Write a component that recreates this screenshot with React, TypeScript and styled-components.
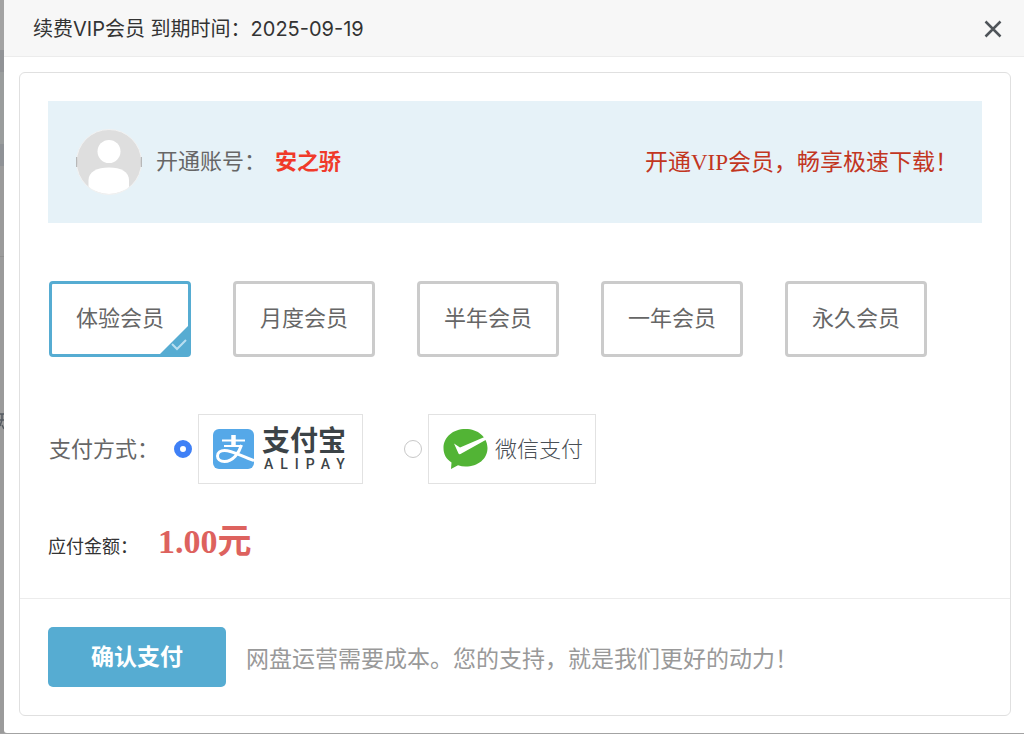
import React, { useState } from "react";
import styled, { createGlobalStyle } from "styled-components";

const serif = `"Liberation Serif", "Noto Sans CJK SC", serif`;
const sans = `Inter, "Noto Sans CJK SC", sans-serif`;
const cjk = `"Noto Sans CJK SC", sans-serif`;

const GlobalStyle = createGlobalStyle`
  * { box-sizing: border-box; }
  body { margin: 0; background: #a3a3a3; font-family: ${serif}; color: #666; }
  h1, p { margin: 0; font-weight: 400; }
`;

const Screen = styled.div`
  display: flex;
  min-height: 100vh;
  padding-bottom: 1px;
`;

const Backdrop = styled.div`
  width: 4px;
  flex: none;
  overflow: hidden;
  padding-top: 412px;
  background: linear-gradient(
    #a3a3a3 0 50px,
    #919396 50px 72px,
    #9a9d9d 72px 144px,
    #8f9296 144px 166px,
    #9b9b9b 166px 256px,
    #8f8f8f 256px 257px,
    #9b9b9b 257px
  );
  svg { display: block; }
`;

const Dialog = styled.section`
  flex: 1;
  min-width: 0;
  display: flex;
  flex-direction: column;
  background: #fff;
  border-bottom-left-radius: 3px;
`;

const TitleBar = styled.header`
  display: flex;
  align-items: center;
  justify-content: space-between;
  height: 57px;
  padding: 2px 22px 0 29px;
  background: #f7f7f7;
  border-bottom: 1px solid #ececec;
`;

const Title = styled.h1`
  font-family: ${sans};
  font-size: 20px;
  line-height: 28px;
  color: #333;
`;

const CloseButton = styled.button`
  display: flex;
  padding: 0;
  border: 0;
  background: none;
  cursor: pointer;
`;

const Card = styled.form`
  flex: 1;
  display: flex;
  flex-direction: column;
  margin: 15px 13px 17px 15px;
  border: 1px solid #e0e0e0;
  border-radius: 6px;
`;

const Content = styled.div`
  flex: 1;
  padding: 28px 28px 0;
`;

const Banner = styled.div`
  display: flex;
  align-items: center;
  justify-content: space-between;
  height: 122px;
  padding: 0 24px 0 28px;
  background: #e6f2f8;
`;

const Account = styled.div`
  display: flex;
  align-items: center;
  font-size: 22px;
  line-height: 32px;
  svg { margin-right: 14px; }
`;

const AccountName = styled.strong`
  margin-left: 9px;
  color: #f03a2a;
`;

const Slogan = styled.p`
  padding-top: 2px;
  font-size: 23px;
  line-height: 32px;
  color: #c2361f;
`;

const Plans = styled.div`
  display: flex;
  flex-wrap: wrap;
  gap: 42px;
  padding: 58px 0 0 1px;
`;

const Plan = styled.button<{ $active: boolean }>`
  position: relative;
  width: 142px;
  height: 76px;
  padding: 0;
  border: 3px solid ${(p) => (p.$active ? "#56acd2" : "#cbcbcb")};
  border-radius: 4px;
  background: #fff;
  color: #666;
  font-family: ${serif};
  font-size: 22px;
  line-height: 32px;
  cursor: pointer;
`;

const Tick = styled.svg`
  position: absolute;
  right: -1px;
  bottom: -1px;
`;

const Methods = styled.fieldset`
  display: flex;
  align-items: center;
  margin: 57px 0 0;
  padding: 0 0 0 1px;
  border: 0;
`;

const MethodsLabel = styled.span`
  width: 125px;
  padding-top: 2px;
  font-size: 22px;
  line-height: 32px;
`;

const Method = styled.label`
  display: flex;
  align-items: center;
  gap: 6px;
  margin-right: 41px;
  cursor: pointer;
`;

const Radio = styled.input`
  appearance: none;
  width: 18px;
  height: 18px;
  margin: 0;
  border: 1px solid #c8c8c8;
  border-radius: 50%;
  background: #fff;
  &:checked { border: 6px solid #3f80f6; }
`;

const Logo = styled.span<{ $width: number }>`
  display: flex;
  align-items: center;
  width: ${(p) => p.$width}px;
  height: 70px;
  padding-left: 14px;
  border: 1px solid #e2e2e2;
`;

const AlipayWordmark = styled.span`
  display: flex;
  flex-direction: column;
  margin-left: 8px;
  color: #3c4347;
`;

const AlipayName = styled.span`
  font-family: "Liberation Sans", ${cjk};
  font-size: 28px;
  font-weight: 700;
  line-height: 30px;
`;

const AlipayLatin = styled.span`
  padding-left: 2px;
  font-family: Roboto, sans-serif;
  font-size: 14px;
  font-weight: 500;
  line-height: 14px;
  letter-spacing: 7px;
`;

const WechatName = styled.span`
  padding-top: 1px;
  margin-left: 6px;
  font-family: ${serif};
  font-size: 22px;
  font-weight: 300;
  line-height: 32px;
  color: #4a4f55;
`;

const Amount = styled.p`
  display: flex;
  align-items: baseline;
  gap: 20px;
  padding-top: 34px;
  font-size: 18px;
  line-height: 48px;
  color: #333;
`;

const Price = styled.strong`
  font-size: 34px;
  color: #dd625e;
`;

const Footer = styled.footer`
  display: flex;
  align-items: center;
  gap: 20px;
  padding: 28px;
  border-top: 1px solid #ececec;
`;

const PayButton = styled.button`
  width: 178px;
  height: 60px;
  padding: 2px 0 0;
  border: 0;
  border-radius: 5px;
  background: #56acd2;
  color: #fff;
  font-family: ${serif};
  font-size: 23px;
  font-weight: 700;
  line-height: 32px;
  cursor: pointer;
`;

const Note = styled.p`
  font-family: ${cjk};
  font-size: 23px;
  line-height: 32px;
  color: #999;
`;

const plans = ["体验会员", "月度会员", "半年会员", "一年会员", "永久会员"];

const Avatar = () => (
  <svg width="66" height="66" viewBox="0 0 66 66" aria-hidden="true">
    <clipPath id="face"><circle cx="33" cy="33" r="32" /></clipPath>
    <circle cx="33" cy="33" r="32.5" fill="#dedede" stroke="#f2f2f2" />
    <g clipPath="url(#face)" fill="#fff">
      <circle cx="33" cy="22.500" r="11.5" />
      <path d="M12.500 66V51C12.500 43 21 38.500 33 38.500S53 43 53 51V66Z" />
    </g>
    <path d="M.7 28v10M65.300 28v10" stroke="#aaa" />
  </svg>
);

const AlipayMark = () => (
  <svg width="41" height="40" viewBox="0 0 41 40" aria-hidden="true">
    <rect width="41" height="40" rx="6" fill="#55a8e8" />
    <g fill="none" stroke="#fff">
      <path d="M20.500 6V16" strokeWidth="4.500" />
      <path d="M9 11.500H32M11 17H29" strokeWidth="2" />
      <path d="M28.500 16C26 24 20 32.500 11.500 32.500C7 32.500 4.500 30 4.500 27C4.500 23.500 7.500 21.500 11.500 21.500C19 21.500 28 27 41 31.500" strokeWidth="3" />
    </g>
  </svg>
);

const WechatMark = () => (
  <svg width="46" height="42" viewBox="0 0 46 42" aria-hidden="true">
    <path d="M22.500 1C35 1 44.500 9 44.500 20S35 38.500 22.500 38.500C20 38.500 17.500 38 15 37.200L8 41L8.500 34.500C3 31 .5 26 .5 20C.5 9 10 1 22.500 1Z" fill="#52b435" />
    <path d="M11 15.500L17 19.500L41.500 9L43.500 11.500L17.500 26Q16 26.500 15.500 25.500Z" fill="#fff" />
  </svg>
);

export default function App() {
  const [plan, setPlan] = useState(0);
  const [method, setMethod] = useState("alipay");
  return (
    <>
      <GlobalStyle />
      <Screen>
        <Backdrop aria-hidden="true">
          <svg width="4" height="20" viewBox="0 0 4 20">
            <path d="M0 2H4M0 8H4M2 2V8L0 14M2 13L4 17" stroke="#555b62" strokeWidth="1.500" fill="none" />
          </svg>
        </Backdrop>
        <Dialog role="dialog" aria-labelledby="title">
          <TitleBar>
            <Title id="title">续费VIP会员 到期时间：2025-09-19</Title>
            <CloseButton type="button" aria-label="关闭">
              <svg width="18" height="18" viewBox="0 0 18 18">
                <path d="M1.500 1.500L16.500 16.500M16.500 1.500L1.500 16.500" stroke="#50555a" strokeWidth="2.500" />
              </svg>
            </CloseButton>
          </TitleBar>
          <Card onSubmit={(e) => e.preventDefault()}>
            <Content>
              <Banner>
                <Account>
                  <Avatar />
                  开通账号：
                  <AccountName>安之骄</AccountName>
                </Account>
                <Slogan>开通VIP会员，畅享极速下载！</Slogan>
              </Banner>
              <Plans>
                {plans.map((name, i) => (
                  <Plan key={name} type="button" $active={i === plan} aria-pressed={i === plan} onClick={() => setPlan(i)}>
                    {name}
                    {i === plan && (
                      <Tick width="30" height="30" viewBox="0 0 30 30">
                        <path d="M30 0V30H0Z" fill="#56acd2" />
                        <path d="M13 19L18 24L27 15" fill="none" stroke="#b9dff0" strokeWidth="2" />
                      </Tick>
                    )}
                  </Plan>
                ))}
              </Plans>
              <Methods>
                <MethodsLabel>支付方式：</MethodsLabel>
                <Method>
                  <Radio type="radio" name="method" checked={method === "alipay"} onChange={() => setMethod("alipay")} />
                  <Logo $width={165}>
                    <AlipayMark />
                    <AlipayWordmark>
                      <AlipayName>支付宝</AlipayName>
                      <AlipayLatin>ALIPAY</AlipayLatin>
                    </AlipayWordmark>
                  </Logo>
                </Method>
                <Method>
                  <Radio type="radio" name="method" checked={method === "wechat"} onChange={() => setMethod("wechat")} />
                  <Logo $width={168}>
                    <WechatMark />
                    <WechatName>微信支付</WechatName>
                  </Logo>
                </Method>
              </Methods>
              <Amount>
                应付金额：
                <Price>1.00元</Price>
              </Amount>
            </Content>
            <Footer>
              <PayButton type="submit">确认支付</PayButton>
              <Note>网盘运营需要成本。您的支持，就是我们更好的动力！</Note>
            </Footer>
          </Card>
        </Dialog>
      </Screen>
    </>
  );
}
